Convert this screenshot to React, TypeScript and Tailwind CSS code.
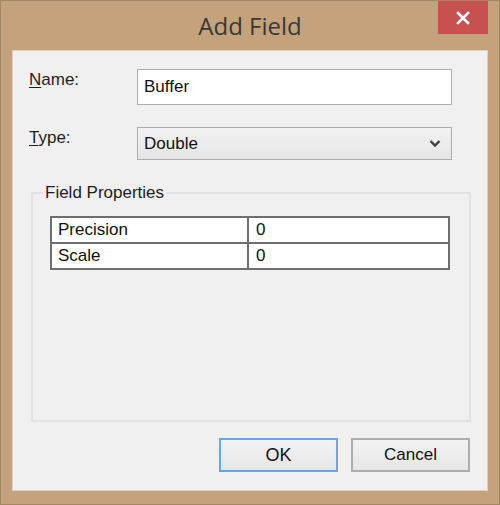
import React from 'react';

const sans = "font-['Liberation_Sans',Arial,sans-serif]";

function Row({ u, rest, children }: { u: string; rest: string; children: React.ReactNode }) {
  return (
    <div className="flex items-start">
      <div className={`w-[108px] pt-[1px] text-[17px] leading-[20px] text-[#1e1e1e] ${sans}`}>
        <span className="underline underline-offset-2">{u}</span>
        {rest}
      </div>
      <div className="flex-1">{children}</div>
    </div>
  );
}

export default function App() {
  return (
    <div className="w-[500px] h-[505px] bg-[#c4a37c] border border-[#a38662] flex flex-col">
      {/* title bar */}
      <div className="relative h-[49px] flex items-center justify-center">
        <span className="text-[24px] text-[#383838] font-['Open_Sans',sans-serif]">Add Field</span>
        <button className="absolute right-[11px] top-[0px] w-[50px] h-[33px] bg-[#c75050] flex items-center justify-center">
          <svg width="14" height="14" viewBox="0 0 14 14">
            <path d="M2 2 L12 12 M12 2 L2 12" stroke="#fff" strokeWidth="2.6" strokeLinecap="square" />
          </svg>
        </button>
      </div>

      {/* client area */}
      <div className="flex-1 mx-[11px] mb-[13px] bg-[#f0f0f0] border border-[#dfd2c0] flex flex-col pt-[18px] pb-[18px]">
        <div className="pl-[16px] pr-[35px] flex flex-col gap-[22px]">
          <Row u="N" rest="ame:">
            <div className={`h-[36px] bg-white border border-[#abadb3] flex items-center px-[6px] text-[17px] text-[#111] ${sans}`}>
              Buffer
            </div>
          </Row>
          <Row u="T" rest="ype:">
            <div className={`h-[33px] bg-gradient-to-b from-[#f2f2f2] to-[#e5e5e5] border border-[#acacac] flex items-center justify-between pl-[6px] pr-[10px] text-[17px] text-[#111] ${sans}`}>
              <span>Double</span>
              <svg width="12" height="9" viewBox="0 0 12 9">
                <path d="M1.5 2 L6 6.5 L10.5 2" stroke="#404040" strokeWidth="2.4" fill="none" />
              </svg>
            </div>
          </Row>
        </div>

        <fieldset className="mt-[24px] ml-[18px] mr-[16px] h-[238px] border-2 border-[#e2e2e2] p-0">
          <legend className={`ml-[10px] px-[2px] text-[17px] leading-[18px] text-[#1e1e1e] ${sans}`}>Field Properties</legend>
          <div className="pl-[17px] pr-[19px] pt-[14px]">
            <table className={`w-full border-collapse text-[17px] text-[#111] ${sans}`}>
              <tbody>
                <tr className="h-[26px]">
                  <td className="w-[197px] border-2 border-[#6e6e6e] bg-white pl-[6px] py-0 leading-[20px]">Precision</td>
                  <td className="border-2 border-[#6e6e6e] bg-white pl-[7px] py-0 leading-[20px]">0</td>
                </tr>
                <tr className="h-[26px]">
                  <td className="border-2 border-[#6e6e6e] bg-white pl-[6px] py-0 leading-[20px]">Scale</td>
                  <td className="border-2 border-[#6e6e6e] bg-white pl-[7px] py-0 leading-[20px]">0</td>
                </tr>
              </tbody>
            </table>
          </div>
        </fieldset>

        <div className="mt-auto flex justify-end gap-[13px] pr-[17px]">
          <button className={`w-[119px] h-[34px] border-2 border-[#5fa8f2] bg-gradient-to-b from-[#f2f2f2] to-[#e6e6e6] text-[18px] text-[#111] ${sans}`}>
            OK
          </button>
          <button className={`w-[119px] h-[34px] border-2 border-[#adadad] bg-gradient-to-b from-[#f2f2f2] to-[#e6e6e6] text-[17px] text-[#111] ${sans}`}>
            Cancel
          </button>
        </div>
      </div>
    </div>
  );
}
